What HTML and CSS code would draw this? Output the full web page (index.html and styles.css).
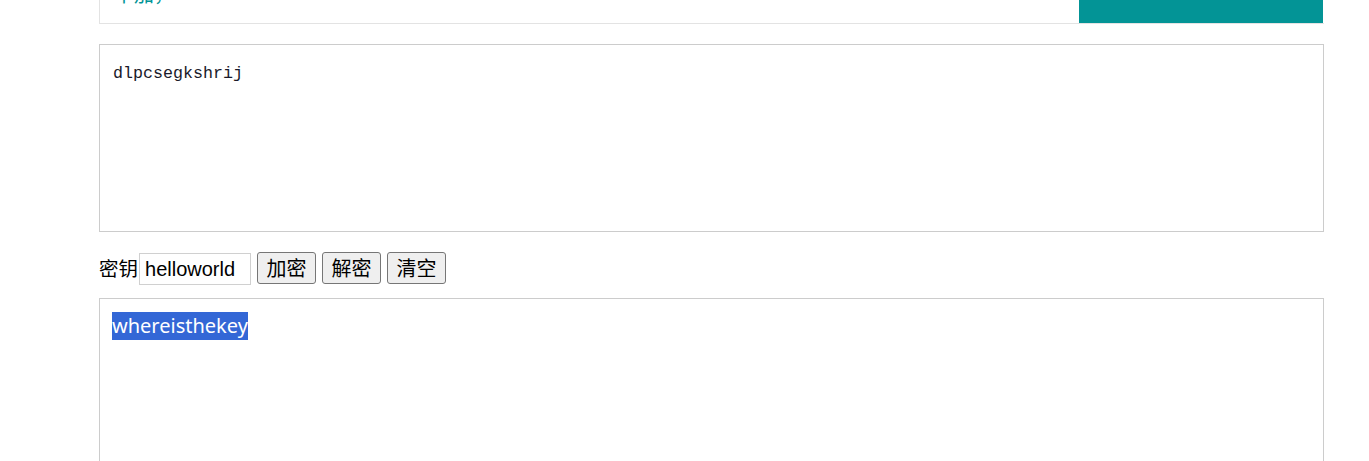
FILE: index.html
```html
<!DOCTYPE html>
<html lang="zh">
<head>
<meta charset="utf-8">
<title>加密解密</title>
<link rel="stylesheet" href="styles.css">
</head>
<body>
<div class="wrap">
  <div class="header">
    <div class="title"><span class="title-text">中加，</span></div>
    <div class="tab"></div>
  </div>
  <div class="box box-top"><span class="mono">dlpcsegkshrij</span></div>
  <div class="row">
    <span class="label">密钥</span>
    <input class="key" type="text" value="helloworld">
    <button class="btn">加密</button>
    <button class="btn">解密</button>
    <button class="btn">清空</button>
  </div>
  <div class="box box-bottom"><span class="sel">whereisthekey</span></div>
</div>
</body>
</html>
```

FILE: styles.css
```css
html, body {
  margin: 0;
  padding: 0;
  background: #fff;
  overflow: hidden;
}
body {
  font-family: "Noto Sans CJK SC", "Noto Sans", sans-serif;
  font-size: 20px;
  color: #000;
}
.wrap {
  margin-left: 99px;
  width: 1225px;
}
.header {
  display: flex;
  height: 23px;
  border-left: 1px solid #e3e3e3;
  border-bottom: 1px solid #e3e3e3;
}
.title {
  flex: 1;
  overflow: hidden;
}
.title-text {
  display: block;
  margin-top: -20px;
  margin-left: 14px;
  color: #029496;
  font-size: 20px;
  line-height: 28px;
}
.tab {
  width: 244px;
  margin-right: 1px;
  margin-left: -1px;
  background: #039496;
}
.box {
  box-sizing: border-box;
  width: 1225px;
  height: 188px;
  border: 1px solid #cccccc;
  padding: 13px 13px;
}
.box-top {
  margin-top: 20px;
  padding-top: 10px;
}
.mono {
  font-family: "Liberation Mono", "DejaVu Sans Mono", monospace;
  font-size: 16.67px;
  line-height: 32px;
  color: #1a1a2a;
}
.row {
  display: flex;
  align-items: flex-start;
  margin-top: 20px;
  height: 33px;
}
.label {
  font-size: 19.5px;
  line-height: 26px;
  margin-top: 3px;
  margin-right: 1px;
}
.key {
  box-sizing: border-box;
  width: 112px;
  height: 32px;
  margin: 1px 6px 0 0;
  padding: 0 5px;
  border: 1px solid #d0d0d0;
  font-family: "Liberation Sans", Arial, sans-serif;
  font-size: 20px;
  color: #000;
  outline: none;
}
.btn {
  box-sizing: border-box;
  height: 32px;
  width: 59px;
  margin: 0 6px 0 0;
  padding: 0;
  border: 1px solid #767676;
  border-radius: 3px;
  background: #efefef;
  font-family: "Noto Sans CJK SC", sans-serif;
  font-size: 20px;
  line-height: 28px;
  color: #000;
}
.box-bottom {
  margin-top: 13px;
  padding: 11px 12px;
}
.sel {
  font-family: "Noto Sans", sans-serif;
  font-size: 20px;
  line-height: 28px;
  background: #3367d6;
  color: #fff;
  display: inline-block;
}
```
